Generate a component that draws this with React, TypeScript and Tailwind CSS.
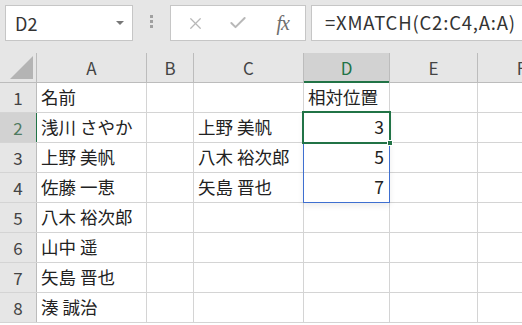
import { X, Check } from 'lucide-react';

const cols = [
  { key: 'A', w: 'w-[110px]' },
  { key: 'B', w: 'w-[47px]' },
  { key: 'C', w: 'w-[110px]' },
  { key: 'D', w: 'w-[86px]' },
  { key: 'E', w: 'w-[88px]' },
  { key: 'F', w: 'w-[88px]' },
];

const data: Record<number, Record<string, string>> = {
  1: { A: '名前', D: '相対位置' },
  2: { A: '浅川 さやか', C: '上野 美帆', D: '3' },
  3: { A: '上野 美帆', C: '八木 裕次郎', D: '5' },
  4: { A: '佐藤 一恵', C: '矢島 晋也', D: '7' },
  5: { A: '八木 裕次郎' },
  6: { A: '山中 遥' },
  7: { A: '矢島 晋也' },
  8: { A: '湊 誠治' },
};

const font = { fontFamily: '"Noto Sans CJK JP", "Noto Sans", sans-serif' };

function FormulaBar() {
  return (
    <div className="flex h-[53px] items-start bg-[#e6e6e6] pt-[5px] pl-[5px]">
      {/* Name box */}
      <div className="relative flex h-[36px] w-[128px] shrink-0 items-center border border-[#c6c6c6] bg-white pl-[9px] text-[18px] text-[#333]">
        D2
        <div className="absolute right-[8px] top-[15px] h-0 w-0 border-x-[4px] border-t-[4px] border-x-transparent border-t-[#777]" />
      </div>
      {/* Dots */}
      <div className="flex w-[37px] shrink-0 flex-col items-center gap-[2px] pt-[10px]">
        <span className="h-[3px] w-[3px] bg-[#a0a0a0]" />
        <span className="h-[3px] w-[3px] bg-[#a0a0a0]" />
        <span className="h-[3px] w-[3px] bg-[#a0a0a0]" />
      </div>
      {/* Buttons */}
      <div className="flex h-[36px] w-[136px] shrink-0 items-center border border-[#c6c6c6] bg-white">
        <div className="flex w-[45px] justify-center pl-[4px]">
          <X size={19} strokeWidth={1.6} color="#b8b8b8" />
        </div>
        <div className="flex w-[45px] justify-center">
          <Check size={20} strokeWidth={2.4} color="#b8b8b8" />
        </div>
        <div
          className="flex w-[45px] justify-center text-[20px] italic text-[#6d6d6d]"
          style={{ fontFamily: '"Liberation Serif", serif' }}
        >
          <span className="tracking-[-1px]">fx</span>
        </div>
      </div>
      {/* Formula input */}
      <div className="ml-[5px] flex h-[36px] flex-1 items-center whitespace-nowrap border border-r-0 border-[#c6c6c6] bg-white pl-[13px] text-[18.5px] tracking-[0.8px] text-[#333]">
        =XMATCH(C2:C4,A:A)
      </div>
    </div>
  );
}

function HeaderRow() {
  return (
    <div className="flex h-[30px] border-b border-[#bcbcbc] bg-[#e6e6e6]">
      <div className="relative w-[37px] shrink-0 border-r border-[#bcbcbc]">
        <div className="absolute bottom-[3px] right-[3px] h-0 w-0 border-b-[23px] border-l-[23px] border-b-[#b4b4b4] border-l-transparent" />
      </div>
      {cols.map((c) => (
        <div
          key={c.key}
          className={`${c.w} shrink-0 flex items-center justify-center border-r border-[#bcbcbc] text-[17px] ${
            c.key === 'D'
              ? 'relative bg-[#d2d2d2] text-[#217346]'
              : 'text-[#444]'
          }`}
        >
          {c.key}
          {c.key === 'D' && (
            <div className="absolute -bottom-px left-0 right-0 h-[2px] bg-[#217346]" />
          )}
        </div>
      ))}
    </div>
  );
}

function Row({ n }: { n: number }) {
  const row = data[n] || {};
  const sel = n === 2;
  return (
    <div className="flex h-[30px] border-b border-[#d4d4d4]">
      <div
        className={`flex w-[37px] shrink-0 items-center justify-center border-r text-[17px] ${
          sel
            ? 'border-r-[#217346] bg-[#d2d2d2] text-[#4f7a60]'
            : 'border-r-[#bcbcbc] bg-[#e6e6e6] text-[#444]'
        }`}
      >
        {n}
      </div>
      {cols.map((c) => {
        const v = row[c.key];
        const num = v !== undefined && /^\d+$/.test(v);
        return (
          <div
            key={c.key}
            className={`${c.w} shrink-0 flex items-center overflow-visible whitespace-nowrap border-r border-[#d4d4d4] text-[17.5px] text-[#222] ${
              num ? 'justify-end pr-[5px]' : 'pl-[4px]'
            }`}
          >
            {v}
          </div>
        );
      })}
    </div>
  );
}

export default function App() {
  return (
    <div className="relative h-[325px] w-[522px] overflow-hidden bg-white" style={font}>
      <FormulaBar />
      <HeaderRow />
      {[1, 2, 3, 4, 5, 6, 7, 8].map((n) => (
        <Row key={n} n={n} />
      ))}

      {/* Spill range border D2:D4 */}
      <div className="pointer-events-none absolute left-[303px] top-[112px] h-[91px] w-[87px] border border-[#3e6fd0] shadow-[0_3px_6px_rgba(0,0,0,0.08)]" />
      {/* Active cell D2 */}
      <div className="pointer-events-none absolute left-[302px] top-[111px] h-[33px] w-[89px] border-2 border-[#217346]" />
      <div className="pointer-events-none absolute left-[387px] top-[140px] h-[6px] w-[6px] border border-white bg-[#217346]" />
    </div>
  );
}
